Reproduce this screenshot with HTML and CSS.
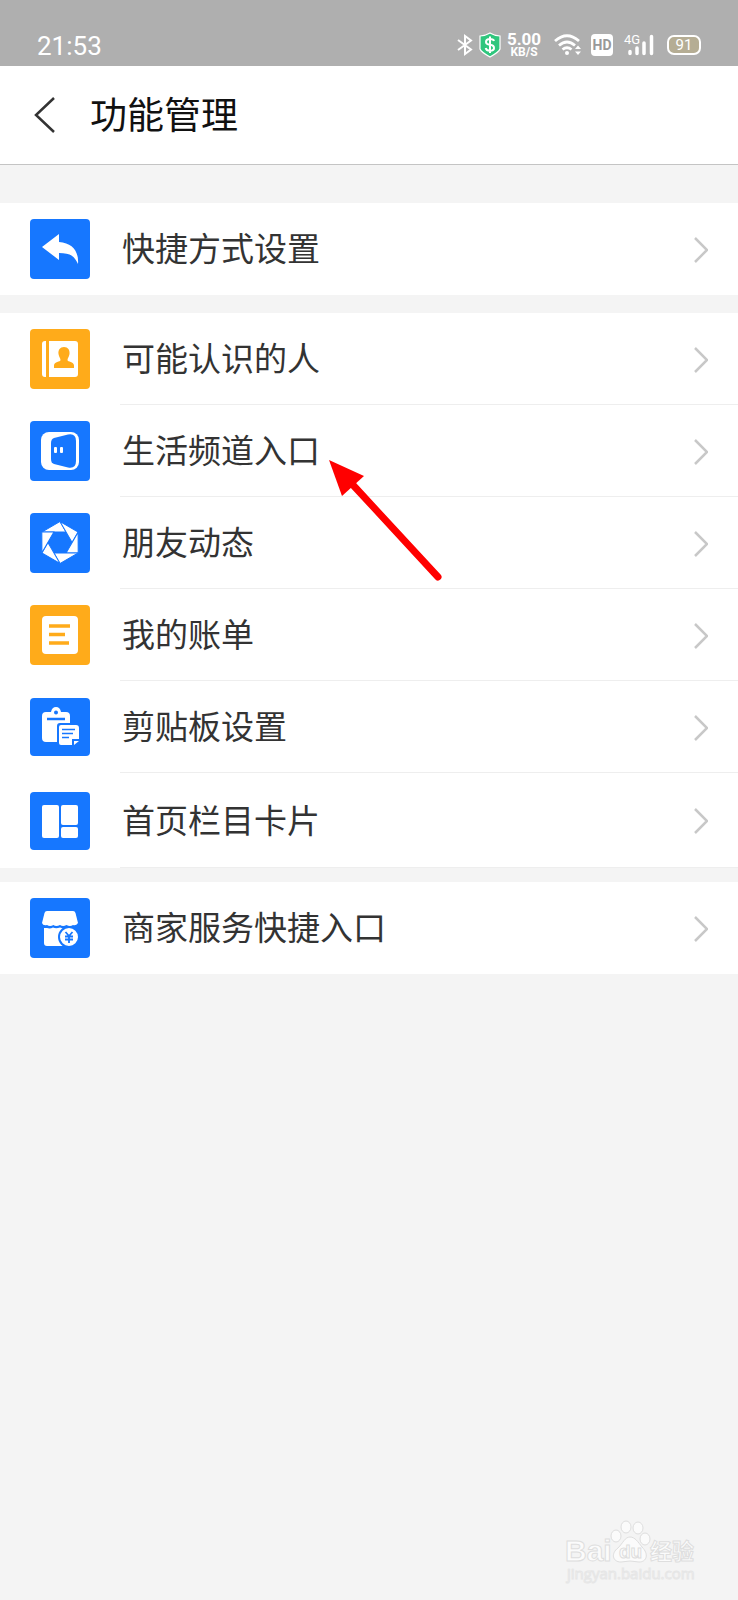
FILE: index.html
```html
<!DOCTYPE html>
<html lang="zh-CN">
<head>
    <meta charset="UTF-8">
    <meta name="viewport" content="width=device-width, initial-scale=1.0">
    <title>功能管理</title>
    <link rel="stylesheet" href="styles.css">
</head>
<body>

    <!-- Status Bar -->
    <div class="status-bar">
        <div class="time">21:53</div>
        <div class="status-icons">
            <svg width="16" height="22" viewBox="0 0 16 22" fill="none" stroke="#fff" stroke-width="2">
                <path d="M1 6 L14 15.500 L8 20 V2 L14 6.500 L1 16"/>
            </svg>
            <svg class="shield" width="22" height="26" viewBox="0 0 22 26">
                <path d="M11 1 Q15 3.500 21 4 V17 Q20 20 11 25 Q2 20 1 17 V4 Q7 3.500 11 1Z" fill="#2fc67d" stroke="#fff" stroke-width="1.200"/>
                <path d="M15 9 Q14.500 7 11 7 Q7 7 7 10 Q7 12.300 11 12.800 Q15 13.300 15 16 Q15 18.800 11 18.800 Q7.300 18.800 6.700 16 M11 4.500 V21" fill="none" stroke="#fff" stroke-width="2"/>
            </svg>
            <div class="speed"><span class="speed-num">5.00</span><span class="speed-unit">KB/S</span></div>
            <svg class="wifi" width="28" height="22" viewBox="0 0 28 22" fill="none" stroke="#fff" stroke-width="2.800">
                <path d="M1 7 Q13 -3.500 25 7 M5 11.500 Q13 4.500 21 11.500 M8.500 15.500 Q13 12 17.500 15.500"/>
                <circle cx="13" cy="19" r="2" fill="#fff" stroke="none"/>
                <path d="M21 15 L24 11.500 L27 15Z M21 17.500 L24 21 L27 17.500Z" fill="#fff" stroke="none"/>
            </svg>
            <div class="hd">HD</div>
            <div class="signal">
                <span class="signal-type">4G</span>
                <svg width="28" height="22" viewBox="0 0 28 22" stroke="#fff" stroke-width="3.500" stroke-linecap="round">
                    <path d="M4 17.500 V19.500 M11 14 V19.500 M18 9 V19.500 M25.500 2.500 V19.500"/>
                </svg>
            </div>
            <div class="battery">91</div>
        </div>
    </div>

    <!-- Title Bar -->
    <header class="title-bar">
        <a class="back" href="#" aria-label="返回">
            <svg width="22" height="36" viewBox="0 0 22 36" fill="none" stroke="#333" stroke-width="2.500">
                <path d="M21 1 L3 18 L21 35"/>
            </svg>
        </a>
        <h1>功能管理</h1>
    </header>

    <main>
        <ul class="group">
            <li class="item">
                <a href="#">
                    <svg class="icon" viewBox="0 0 60 60">
                        <rect width="60" height="60" rx="4" fill="#1677ff"/>
                        <path d="M12 28 L29 15 V23 C43 24 49 33 48 45 C44 36 39 34 29 34 V41Z" fill="#fff"/>
                    </svg>
                    <span class="label">
                        <span class="name">快捷方式设置</span>
                        <svg class="chevron" viewBox="0 0 14 26"><path d="M1 1 L13 13 L1 25"/></svg>
                    </span>
                </a>
            </li>
        </ul>

        <ul class="group">
            <li class="item">
                <a href="#">
                    <svg class="icon" viewBox="0 0 60 60">
                        <rect width="60" height="60" rx="4" fill="#ffab1a"/>
                        <path d="M16 12 V48 H15 Q12 48 12 45 V15 Q12 12 15 12Z M19 12 H45 Q48 12 48 15 V45 Q48 48 45 48 H19Z" fill="#fff"/>
                        <path d="M34 18 C38 18 40 21 39.500 25 C39 28 37.500 29 37.500 31 C37.500 33 44 32.500 44 36.500 V39 H24 V36.500 C24 32.500 30.500 33 30.500 31 C30.500 29 29 28 28.500 25 C28 21 30 18 34 18Z" fill="#ffab1a"/>
                    </svg>
                    <span class="label">
                        <span class="name">可能认识的人</span>
                        <svg class="chevron" viewBox="0 0 14 26"><path d="M1 1 L13 13 L1 25"/></svg>
                    </span>
                </a>
            </li>
            <li class="item">
                <a href="#">
                    <svg class="icon" viewBox="0 0 60 60">
                        <rect width="60" height="60" rx="4" fill="#1677ff"/>
                        <rect x="11" y="11" width="38" height="38" rx="8" fill="#fff"/>
                        <path d="M24 17 L38 13.500 Q46 12 46 20 V40 Q46 48 38 46.500 L24 43 Q21 42 21 38 V22 Q21 18 24 17Z" fill="#1677ff"/>
                        <rect x="24" y="26" width="3" height="6" rx="1" fill="#fff"/>
                        <rect x="30" y="26" width="3" height="6" rx="1" fill="#fff"/>
                    </svg>
                    <span class="label">
                        <span class="name">生活频道入口</span>
                        <svg class="chevron" viewBox="0 0 14 26"><path d="M1 1 L13 13 L1 25"/></svg>
                    </span>
                </a>
                <!-- Pointer -->
                <svg class="arrow" width="116" height="124" viewBox="0 0 116 124">
                    <path d="M25 25 L110 117" stroke="#f00" stroke-width="7" stroke-linecap="round"/>
                    <path d="M1 0 L36 16 L14 36Z" fill="#f00"/>
                </svg>
            </li>
            <li class="item">
                <a href="#">
                    <svg class="icon" viewBox="0 0 60 60">
                        <rect width="60" height="60" rx="4" fill="#1677ff"/>
                        <g fill="#fff" stroke="#1677ff" stroke-width="1">
                            <path d="M12 19 L30 8.500 L36 19Z"/>
                            <path d="M12 19 L30 8.500 L36 19Z" transform="rotate(60 30 29.500)"/>
                            <path d="M12 19 L30 8.500 L36 19Z" transform="rotate(120 30 29.500)"/>
                            <path d="M12 19 L30 8.500 L36 19Z" transform="rotate(180 30 29.500)"/>
                            <path d="M12 19 L30 8.500 L36 19Z" transform="rotate(240 30 29.500)"/>
                            <path d="M12 19 L30 8.500 L36 19Z" transform="rotate(300 30 29.500)"/>
                        </g>
                    </svg>
                    <span class="label">
                        <span class="name">朋友动态</span>
                        <svg class="chevron" viewBox="0 0 14 26"><path d="M1 1 L13 13 L1 25"/></svg>
                    </span>
                </a>
            </li>
            <li class="item">
                <a href="#">
                    <svg class="icon" viewBox="0 0 60 60">
                        <rect width="60" height="60" rx="4" fill="#ffab1a"/>
                        <rect x="12" y="11" width="36" height="38" rx="4" fill="#fff"/>
                        <path d="M19 21 H40 M19 29.500 H35 M19 38 H39" stroke="#ffab1a" stroke-width="3.500"/>
                    </svg>
                    <span class="label">
                        <span class="name">我的账单</span>
                        <svg class="chevron" viewBox="0 0 14 26"><path d="M1 1 L13 13 L1 25"/></svg>
                    </span>
                </a>
            </li>
            <li class="item">
                <a href="#">
                    <svg class="icon" viewBox="0 0 60 60">
                        <rect y="1" width="60" height="58" rx="4" fill="#1677ff"/>
                        <path d="M16 15 H21 Q22 10 26 10 Q30 10 31 15 H36 Q40 15 40 19 V45 H16 Q12 45 12 41 V19 Q12 15 16 15Z" fill="#fff"/>
                        <circle cx="26" cy="15.500" r="2" fill="#1677ff"/>
                        <path d="M17 22 H35" stroke="#1677ff" stroke-width="2.500"/>
                        <path d="M30 26 H46 Q50 26 50 30 V50 H27 V29 Q27 26 30 26Z" fill="#1677ff"/>
                        <path d="M31 28 H46 Q49 28 49 31 V42 H42 V48 H31 Q29 48 29 46 V30 Q29 28 31 28Z M44 44 H49 L44 48Z" fill="#fff"/>
                        <path d="M32 32.500 H45 M32 36.500 H43 M32 40.500 H39" stroke="#1677ff" stroke-width="1.500"/>
                    </svg>
                    <span class="label">
                        <span class="name">剪贴板设置</span>
                        <svg class="chevron" viewBox="0 0 14 26"><path d="M1 1 L13 13 L1 25"/></svg>
                    </span>
                </a>
            </li>
            <li class="item">
                <a href="#">
                    <svg class="icon" viewBox="0 0 60 60">
                        <rect y="1" width="60" height="58" rx="4" fill="#1677ff"/>
                        <g fill="#fff">
                            <rect x="12" y="14" width="17" height="33" rx="2"/>
                            <rect x="31" y="14" width="17" height="20" rx="2"/>
                            <rect x="31" y="36" width="17" height="11" rx="2"/>
                        </g>
                    </svg>
                    <span class="label">
                        <span class="name">首页栏目卡片</span>
                        <svg class="chevron" viewBox="0 0 14 26"><path d="M1 1 L13 13 L1 25"/></svg>
                    </span>
                </a>
            </li>
        </ul>

        <ul class="group">
            <li class="item">
                <a href="#">
                    <svg class="icon" viewBox="0 0 60 60">
                        <rect width="60" height="60" rx="4" fill="#1677ff"/>
                        <path d="M17 13 H43 Q45 13 45.500 15 L48 25 Q46 28 43 27 Q40 29 36.500 27 Q33 29 30 27 Q26 29 23.500 27 Q20 29 17 27 Q13 28 12 25 L14.500 15 Q15 13 17 13Z" fill="#fff"/>
                        <path d="M14 30 H17 Q20 31 23 29.500 Q26 31 30 29.500 Q33 31 36 29.500 H40 V48 H17 Q14 48 14 45Z" fill="#fff"/>
                        <circle cx="39" cy="39" r="10" fill="#fff" stroke="#1677ff" stroke-width="2"/>
                        <path d="M35.500 34 L39 38 L42.500 34 M39 38 V45 M35 38.500 H43 M35 41.500 H43" fill="none" stroke="#1677ff" stroke-width="1.800"/>
                    </svg>
                    <span class="label">
                        <span class="name">商家服务快捷入口</span>
                        <svg class="chevron" viewBox="0 0 14 26"><path d="M1 1 L13 13 L1 25"/></svg>
                    </span>
                </a>
            </li>
        </ul>
    </main>

    <!-- Watermark -->
    <svg class="watermark" width="136" height="72" viewBox="0 0 136 72">
        <g class="mark-shape">
            <ellipse cx="52" cy="20" rx="5" ry="6"/>
            <ellipse cx="62" cy="11" rx="5" ry="6"/>
            <ellipse cx="74" cy="12" rx="5" ry="6"/>
            <ellipse cx="81" cy="23" rx="5" ry="6"/>
            <path d="M66 21 C71 21 74 26 78 31 C85 38 83 46 75 46 Q66 44 57 46 C48 46 47 37 54 32 C59 27 61 21 66 21Z"/>
        </g>
        <text class="mark-name" x="1" y="45">Bai</text>
        <text class="mark-du" x="55" y="42">du</text>
        <text class="mark-cn" x="86" y="43">经验</text>
        <text class="mark-url" x="3" y="63">jingyan.baidu.com</text>
    </svg>

</body>
</html>
```
FILE: styles.css
```css
* {
    margin: 0;
    padding: 0;
    box-sizing: border-box;
}
body {
    position: relative;
    min-height: 100vh;
    font-family: "Noto Sans CJK SC", sans-serif;
    background-color: #f4f4f4;
    color: #333;
}
svg {
    display: block;
    flex-shrink: 0;
}
a {
    color: inherit;
    text-decoration: none;
}
.status-bar {
    display: flex;
    justify-content: space-between;
    align-items: center;
    height: 66px;
    padding: 24px 37px 0;
    background: #afafaf;
    color: white;
    font-family: Roboto, sans-serif;
}
.time {
    padding-top: 2px;
    font-size: 26px;
    line-height: 30px;
}
.status-icons {
    display: flex;
    align-items: center;
}
.shield {
    margin-left: 6px;
}
.speed {
    display: flex;
    flex-direction: column;
    align-items: center;
    width: 34px;
    margin-left: 6px;
    font-weight: bold;
}
.speed-num {
    font-size: 17px;
    line-height: 14px;
}
.speed-unit {
    font-size: 12px;
    line-height: 12px;
}
.wifi {
    margin-left: 13px;
}
.hd {
    width: 22px;
    margin-left: 9px;
    border-radius: 4px;
    background: white;
    color: #999;
    font-size: 14px;
    font-weight: bold;
    line-height: 22px;
    text-align: center;
}
.signal {
    position: relative;
    margin-left: 13px;
}
.signal-type {
    position: absolute;
    top: 0;
    left: -2px;
    font-size: 13px;
    line-height: 12px;
}
.battery {
    width: 34px;
    margin-left: 13px;
    border: 2px solid white;
    border-radius: 7px;
    background: #b5ad94;
    font-size: 15px;
    line-height: 16px;
    text-align: center;
}
.title-bar {
    display: flex;
    align-items: center;
    height: 99px;
    padding: 0 33px;
    border-bottom: 1px solid #c4c4c4;
    background: white;
}
.back {
    margin-right: 35px;
}
h1 {
    padding-bottom: 4px;
    color: #111;
    font-size: 37px;
    font-weight: normal;
    line-height: 48px;
}
main {
    padding-top: 38px;
}
.group {
    margin-bottom: 18px;
    background: white;
    list-style: none;
}
.group + .group + .group {
    margin-top: -4px;
}
.item {
    position: relative;
}
.item a {
    display: flex;
    align-items: center;
    height: 92px;
    padding-left: 30px;
}
.item:last-child:not(:first-child) a {
    height: 95px;
}
.icon {
    width: 60px;
    height: 60px;
}
.label {
    display: flex;
    flex: 1;
    align-items: center;
    align-self: stretch;
    margin-left: 30px;
    padding: 2px 30px 0 2px;
    border-bottom: 1px solid #eee;
}
.item:only-child .label {
    border-bottom-color: transparent;
}
.name {
    flex: 1;
    padding-bottom: 5px;
    font-size: 33px;
    line-height: 48px;
}
.chevron {
    width: 14px;
    height: 26px;
    fill: none;
    stroke: #c8c8c8;
    stroke-width: 2.5px;
}
.arrow {
    position: absolute;
    top: 55px;
    left: 328px;
    z-index: 1;
}
.watermark {
    position: absolute;
    right: 38px;
    bottom: 12px;
    overflow: visible;
}
.mark-shape, .watermark text {
    fill: #fbfbfb;
    stroke: #dedede;
    stroke-width: 1;
}
.watermark .mark-name {
    font: bold 30px "Liberation Sans", sans-serif;
}
.watermark .mark-du {
    font: bold 19px "Liberation Sans", sans-serif;
}
.watermark .mark-cn {
    font-size: 22px;
    font-weight: bold;
}
.watermark .mark-url {
    font: 15px "Open Sans", sans-serif;
    stroke: #e6e6e6;
}
```
